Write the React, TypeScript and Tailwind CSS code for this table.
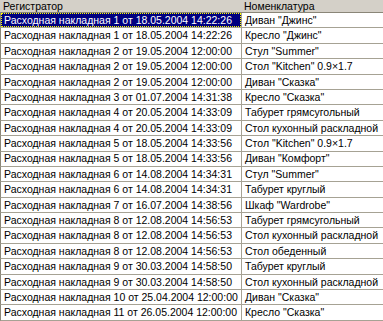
const ROWS: [string, string][] = [
  ['Расходная накладная 1 от 18.05.2004 14:22:26', 'Диван "Джинс"'],
  ['Расходная накладная 1 от 18.05.2004 14:22:26', 'Кресло "Джинс"'],
  ['Расходная накладная 2 от 19.05.2004 12:00:00', 'Стул "Summer"'],
  ['Расходная накладная 2 от 19.05.2004 12:00:00', 'Стол "Kitchen" 0.9×1.7'],
  ['Расходная накладная 2 от 19.05.2004 12:00:00', 'Диван "Сказка"'],
  ['Расходная накладная 3 от 01.07.2004 14:31:38', 'Кресло "Сказка"'],
  ['Расходная накладная 4 от 20.05.2004 14:33:09', 'Табурет грямсугольный'],
  ['Расходная накладная 4 от 20.05.2004 14:33:09', 'Стол кухонный раскладной'],
  ['Расходная накладная 5 от 18.05.2004 14:33:56', 'Стол "Kitchen" 0.9×1.7'],
  ['Расходная накладная 5 от 18.05.2004 14:33:56', 'Диван "Комфорт"'],
  ['Расходная накладная 6 от 14.08.2004 14:34:31', 'Стул "Summer"'],
  ['Расходная накладная 6 от 14.08.2004 14:34:31', 'Табурет круглый'],
  ['Расходная накладная 7 от 16.07.2004 14:38:56', 'Шкаф "Wardrobe"'],
  ['Расходная накладная 8 от 12.08.2004 14:56:53', 'Табурет грямсугольный'],
  ['Расходная накладная 8 от 12.08.2004 14:56:53', 'Стол кухонный раскладной'],
  ['Расходная накладная 8 от 12.08.2004 14:56:53', 'Стол обеденный'],
  ['Расходная накладная 9 от 30.03.2004 14:58:50', 'Табурет круглый'],
  ['Расходная накладная 9 от 30.03.2004 14:58:50', 'Стол кухонный раскладной'],
  ['Расходная накладная 10 от 25.04.2004 12:00:00', 'Диван "Сказка"'],
  ['Расходная накладная 11 от 26.05.2004 12:00:00', 'Кресло "Сказка"'],
];

export default function App() {
  return (
    <div
      className="w-[383px] h-[321px] overflow-hidden bg-white text-[10.5px] leading-none text-black"
      style={{ fontFamily: '"Liberation Sans", Arial, sans-serif' }}
    >
      {/* header */}
      <div className="flex h-[13px] bg-[#d4d0c8] border-b border-[#8a8678]">
        <div className="w-[241px] shrink-0 pl-[3px] flex items-center">Регистратор</div>
        <div className="flex-1 pl-[3px] flex items-center">Номенклатура</div>
      </div>

      {/* rows */}
      {ROWS.map(([reg, item], i) => (
        <div key={i} className="flex h-[15.4px] border-b border-[#a6a294] border-l border-l-[#8a8678]">
          <div
            className={
              i === 0
                ? 'w-[240px] shrink-0 pl-[2px] flex items-center bg-[#000080] text-white border border-dotted border-[#ffff00] whitespace-nowrap overflow-hidden'
                : 'w-[240px] shrink-0 pl-[3px] flex items-center whitespace-nowrap overflow-hidden'
            }
          >
            {reg}
          </div>
          <div className="flex-1 pl-[3px] flex items-center border-l border-[#a6a294] whitespace-nowrap overflow-hidden">
            {item}
          </div>
        </div>
      ))}
    </div>
  );
}
